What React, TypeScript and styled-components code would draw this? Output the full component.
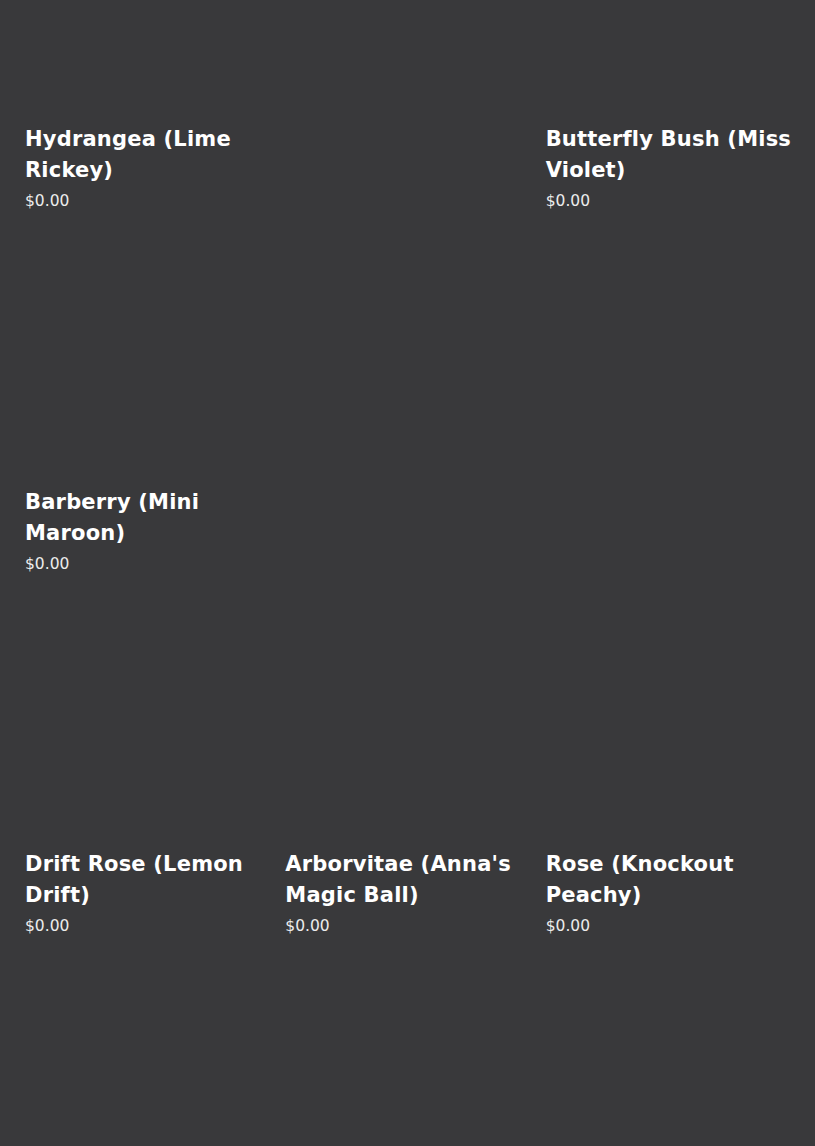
import React from "react";
import styled, { createGlobalStyle } from "styled-components";

const GlobalStyle = createGlobalStyle`
  html, body {
    margin: 0;
    padding: 0;
    background: #39393b;
  }
  body {
    font-family: "DejaVu Sans", "Liberation Sans", sans-serif;
    color: #ffffff;
  }
  * { box-sizing: border-box; }
`;

const Viewport = styled.main`
  height: 1146px;
  overflow: hidden;
  background: #39393b;
`;

const Grid = styled.ul`
  list-style: none;
  margin: -141px 0 0;
  padding: 0 9px 0 25px;
  display: grid;
  grid-template-columns: repeat(3, 1fr);
  row-gap: 0;
`;

const Card = styled.li`
  display: flex;
  flex-direction: column;
  padding-right: 14px;
  padding-bottom: 9.5px;
`;

const ImageBox = styled.div`
  height: 254px;
  background: transparent;
`;

const Title = styled.h3`
  margin: 11px 0 0;
  font-family: "DejaVu Sans", sans-serif;
  font-weight: 700;
  font-size: 21px;
  letter-spacing: 0.2px;
  line-height: 31px;
  color: #ffffff;
`;

const Price = styled.span`
  margin-top: 4px;
  font-family: "DejaVu Sans", sans-serif;
  font-weight: 400;
  font-size: 15.5px;
  line-height: 22px;
  color: #ececec;
`;

type Product = { name: string } | null;

const products: Product[] = [
  { name: "Hydrangea (Lime Rickey)" },
  null,
  { name: "Butterfly Bush (Miss Violet)" },
  { name: "Barberry (Mini Maroon)" },
  null,
  null,
  { name: "Drift Rose (Lemon Drift)" },
  { name: "Arborvitae (Anna's Magic Ball)" },
  { name: "Rose (Knockout Peachy)" },
  null,
  null,
  null,
];

export default function App() {
  return (
    <>
      <GlobalStyle />
      <Viewport>
        <Grid>
          {products.map((p, i) => (
            <Card key={i}>
              <ImageBox />
              {p && (
                <>
                  <Title>{p.name}</Title>
                  <Price>$0.00</Price>
                </>
              )}
            </Card>
          ))}
        </Grid>
      </Viewport>
    </>
  );
}
